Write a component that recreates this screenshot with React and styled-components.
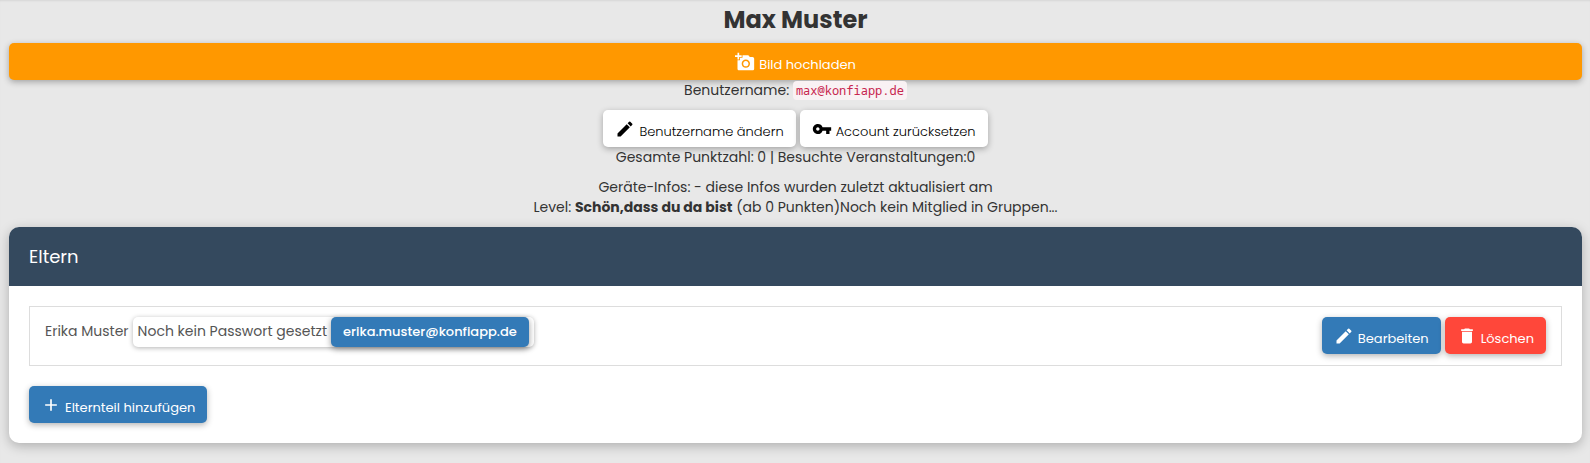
import React from "react";
import styled, { createGlobalStyle, css } from "styled-components";
import { MdAddAPhoto, MdEdit, MdVpnKey, MdDelete, MdAdd } from "react-icons/md";

const GlobalStyle = createGlobalStyle`
  *, *::before, *::after { box-sizing: border-box; }
  body {
    margin: 0;
    background: #e8e8e8;
    color: #333;
    font: 400 14px/20px Poppins, Inter, sans-serif;
  }
  button { font-family: inherit; }
`;

const Page = styled.div`
  min-height: 100vh;
  padding: 0 8px 20px 9px;
  box-shadow: inset 0 2px 2px -1px rgba(0, 0, 0, 0.08);
`;

const Profile = styled.header`
  display: flex;
  flex-direction: column;
  align-items: center;
  text-align: center;
`;

const Name = styled.h1`
  margin: 0;
  padding: 6px 0 9px;
  font-size: 24px;
  line-height: 28px;
  font-weight: 700;
`;

const tones = {
  orange: css`background: #ff9800; color: #fff;`,
  white: css`background: #fff; color: #000; font-weight: 300;`,
  blue: css`background: #337ab7; color: #fff;`,
  red: css`background: #ff473a; color: #fff;`,
};

const Button = styled.button`
  display: inline-flex;
  align-items: center;
  justify-content: center;
  gap: 4px;
  width: ${(p) => (p.$block ? "100%" : "auto")};
  height: 37px;
  padding: 0 12px;
  border: 0;
  border-radius: 5px;
  font-size: 13px;
  line-height: 20px;
  font-weight: 400;
  white-space: nowrap;
  cursor: pointer;
  box-shadow: 0 2px 6px rgba(0, 0, 0, 0.3);
  ${(p) => tones[p.$tone]}

  svg {
    width: 20px;
    height: 20px;
    flex: none;
  }
  span { padding-top: 7px; }
`;

const Code = styled.code`
  display: inline-block;
  padding: 0 3px;
  border-radius: 4px;
  background: #f9f2f4;
  color: #c7254e;
  font: 12px/19px "Noto Sans Mono", "DejaVu Sans Mono", monospace;
`;

const Line = styled.p`
  margin: ${(p) => (p.$spaced ? "10px 0 0" : "0")};
  strong { font-weight: 700; }
`;

const Actions = styled.div`
  display: flex;
  gap: 4px;
  margin-top: ${(p) => (p.$spaced ? "10px" : "0")};
`;

const Card = styled.section`
  margin-top: 10px;
  border-radius: 10px;
  overflow: hidden;
  background: #fff;
  box-shadow: 0 3px 12px rgba(0, 0, 0, 0.25);
`;

const CardTitle = styled.h2`
  margin: 0;
  padding: 20px;
  background: #34495e;
  color: #fff;
  font-size: 18px;
  line-height: 19px;
  font-weight: 400;
`;

const CardBody = styled.div`
  padding: 20px;
`;

const Parents = styled.ul`
  margin: 0 0 20px;
  padding: 0;
  list-style: none;
`;

const Parent = styled.li`
  display: flex;
  justify-content: space-between;
  align-items: flex-start;
  min-height: 60px;
  padding: 10px 15px;
  border: 1px solid #ddd;
  color: #555;
`;

const Identity = styled.div`
  display: flex;
  align-items: baseline;
  gap: 4px;
`;

const Status = styled.span`
  display: flex;
  align-items: baseline;
  gap: 4px;
  height: 30px;
  padding: 0 5px;
  border-radius: 5px;
  background: #fff;
  box-shadow: 0 1px 5px rgba(0, 0, 0, 0.3);
`;

const Mail = styled.span`
  padding: 5px 12px;
  border-radius: 5px;
  background: #337ab7;
  color: #fff;
  font-size: 13px;
  font-weight: 500;
  box-shadow: 0 2px 6px rgba(0, 0, 0, 0.4);
`;

function IconButton({ icon: Icon, children, ...props }) {
  return (
    <Button type="button" {...props}>
      <Icon aria-hidden="true" />
      <span>{children}</span>
    </Button>
  );
}

export default function App() {
  return (
    <>
      <GlobalStyle />
      <Page>
        <Profile>
          <Name>Max Muster</Name>
          <IconButton $tone="orange" $block icon={MdAddAPhoto}>Bild hochladen</IconButton>
          <Line>Benutzername: <Code>max@konfiapp.de</Code></Line>
          <Actions $spaced>
            <IconButton $tone="white" icon={MdEdit}>Benutzername ändern</IconButton>
            <IconButton $tone="white" icon={MdVpnKey}>Account zurücksetzen</IconButton>
          </Actions>
          <Line>Gesamte Punktzahl: 0 | Besuchte Veranstaltungen:0</Line>
          <Line $spaced>Geräte-Infos: - diese Infos wurden zuletzt aktualisiert am</Line>
          <Line>Level: <strong>Schön,dass du da bist</strong> (ab 0 Punkten)Noch kein Mitglied in Gruppen...</Line>
        </Profile>
        <Card>
          <CardTitle>Eltern</CardTitle>
          <CardBody>
            <Parents>
              <Parent>
                <Identity>
                  <span>Erika Muster</span>
                  <Status>
                    Noch kein Passwort gesetzt
                    <Mail>erika.muster@konfiapp.de</Mail>
                  </Status>
                </Identity>
                <Actions>
                  <IconButton $tone="blue" icon={MdEdit}>Bearbeiten</IconButton>
                  <IconButton $tone="red" icon={MdDelete}>Löschen</IconButton>
                </Actions>
              </Parent>
            </Parents>
            <IconButton $tone="blue" icon={MdAdd}>Elternteil hinzufügen</IconButton>
          </CardBody>
        </Card>
      </Page>
    </>
  );
}
